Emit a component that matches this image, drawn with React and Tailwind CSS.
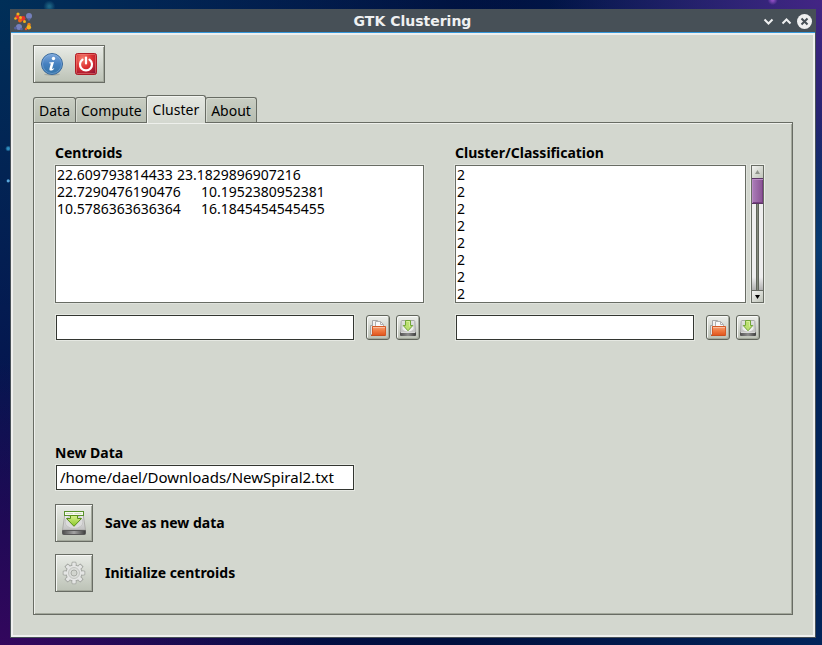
import React from "react";

const CENTROIDS =
  "22.609793814433\t23.1829896907216\n22.7290476190476\t10.1952380952381\n10.5786363636364\t16.1845454545455";
const CLASSES = "2\n2\n2\n2\n2\n2\n2\n2";

function AppLogo() {
  return (
    <svg viewBox="0 0 20 20" className="h-5 w-5" aria-hidden="true">
      <circle cx="16" cy="5" r="3" fill="#7480bc" />
      <circle cx="6" cy="16" r="3" fill="#7480bc" />
      <circle cx="2.500" cy="17" r="1.500" fill="#56629c" />
      <circle cx="16" cy="8.500" r="1.300" fill="#56629c" />
      <circle cx="8.500" cy="18" r="1.300" fill="#56629c" />
      <circle cx="4.500" cy="6" r="2.200" fill="#e6342c" />
      <circle cx="10" cy="7.500" r="2.400" fill="#e6342c" />
      <circle cx="7" cy="9.500" r="2" fill="#ee6418" />
      <circle cx="5" cy="3" r="1.600" fill="#f2b01c" />
      <circle cx="7.500" cy="6.500" r="1.500" fill="#f2b01c" />
      <circle cx="2.500" cy="7.500" r="1.300" fill="#f2b01c" />
      <circle cx="11.500" cy="10.500" r="1.500" fill="#f2b01c" />
      <circle cx="16" cy="13.500" r="1.700" fill="#ee7a18" />
      <circle cx="15.800" cy="16.300" r="2.300" fill="#f2b01c" />
      <circle cx="13" cy="18" r="1.200" fill="#e6542c" />
    </svg>
  );
}

function InfoIcon() {
  return (
    <svg viewBox="0 0 24 24" className="h-6 w-6" aria-hidden="true">
      <defs>
        <linearGradient id="info" x1="0" y1="0" x2="0" y2="1">
          <stop offset="0" stopColor="#7fa9dc" />
          <stop offset="0.5" stopColor="#4580c0" />
          <stop offset="1" stopColor="#3373a6" />
        </linearGradient>
      </defs>
      <ellipse cx="12" cy="22.500" rx="8" ry="1.200" fill="#000" opacity="0.15" />
      <circle cx="12" cy="12" r="10.500" fill="url(#info)" stroke="#3a6a9c" />
      <circle cx="12" cy="12" r="9.500" fill="none" stroke="#8db6e4" strokeOpacity="0.5" />
      <circle cx="13.500" cy="6.500" r="1.700" fill="#fff" />
      <path d="M9.300 10.600 14 10l-1.800 6.300c-.2.900.4.900 1.700 0l.4.500c-1.300 1.400-2.500 1.900-3.600 1.800-1.200-.1-1.500-1-1.200-2.200l1.200-4.300c.2-.7 0-.9-1.500-.9z" fill="#fff" />
    </svg>
  );
}

function PowerIcon() {
  return (
    <svg viewBox="0 0 24 24" className="h-6 w-6" aria-hidden="true">
      <defs>
        <radialGradient id="power" cx="0.35" cy="0.25" r="0.9">
          <stop offset="0" stopColor="#f58070" />
          <stop offset="0.5" stopColor="#dc2f30" />
          <stop offset="1" stopColor="#8c1034" />
        </radialGradient>
      </defs>
      <rect x="1.500" y="1.500" width="21" height="21" rx="2" fill="url(#power)" stroke="#ae1d26" />
      <rect x="2.500" y="2.500" width="19" height="19" rx="1" fill="none" stroke="#f08a80" strokeOpacity="0.5" />
      <path d="M8.500 7.600a6 6 0 1 0 7 0" fill="none" stroke="#fff" strokeWidth="2.200" strokeLinecap="round" />
      <path d="M12 5.500v6" stroke="#fff" strokeWidth="2.200" strokeLinecap="round" />
    </svg>
  );
}

function FolderIcon() {
  return (
    <svg viewBox="0 0 16 16" className="h-4 w-4" aria-hidden="true">
      <defs>
        <linearGradient id="folder" x1="0" y1="0" x2="0" y2="1">
          <stop offset="0" stopColor="#f7a27a" />
          <stop offset="0.4" stopColor="#f08048" />
          <stop offset="1" stopColor="#e2531c" />
        </linearGradient>
      </defs>
      <path d="M.5 14.500v-9h2v9z" fill="#e6e6e6" stroke="#a6a6a6" />
      <path d="M2.500 13V.5h5l2 2V13z" fill="#f2f2f2" stroke="#a6a6a6" />
      <path d="M5.500 12V1.500h5l3 3V12z" fill="#fafafa" stroke="#b0b0b0" />
      <path d="M10.500 1.500v3h3" fill="none" stroke="#b0b0b0" />
      <path d="M2.500 6.500h13v9h-13z" fill="url(#folder)" stroke="#d65a26" />
      <path d="M3 7.500h12" stroke="#fbc6a8" strokeOpacity="0.8" />
      <path d="M1 15.500h14" stroke="#c9501f" />
    </svg>
  );
}

function SmallDriveIcon() {
  return (
    <svg viewBox="0 0 16 16" className="h-4 w-4" aria-hidden="true">
      <defs>
        <linearGradient id="sdrive" x1="0" y1="0" x2="0" y2="1">
          <stop offset="0" stopColor="#e4e5e4" />
          <stop offset="1" stopColor="#c2c3c2" />
        </linearGradient>
        <linearGradient id="sfront" x1="0" y1="0" x2="1" y2="0">
          <stop offset="0" stopColor="#505050" />
          <stop offset="0.5" stopColor="#8c8c8c" />
          <stop offset="1" stopColor="#404040" />
        </linearGradient>
      </defs>
      <path d="M2 .5h12q.6 0 .8 1l.7 11H.5l.7-11q.2-1 .8-1z" fill="url(#sdrive)" stroke="#a9aaa8" />
      <ellipse cx="8" cy="8" rx="5.500" ry="3.500" fill="#efefef" />
      <path d="M0 12.500h16V15q0 1-1 1H1q-1 0-1-1z" fill="url(#sfront)" />
      <path d="M1 12.500h14" stroke="#d8d8d8" />
      <path d="M5.500.5h5v5h2.300L8 10.800 3.200 5.500h2.300z" fill="#bce070" stroke="#72a63a" />
      <path d="M6.500 1.500h3v5" fill="none" stroke="#dcf2a8" strokeOpacity="0.8" />
    </svg>
  );
}

function DriveIcon() {
  return (
    <svg viewBox="0 0 26 26" className="h-[26px] w-[26px]" aria-hidden="true">
      <defs>
        <linearGradient id="drive" x1="0" y1="0" x2="0" y2="1">
          <stop offset="0" stopColor="#f2f2f2" />
          <stop offset="1" stopColor="#c0c0c0" />
        </linearGradient>
        <linearGradient id="front" x1="0" y1="0" x2="1" y2="0">
          <stop offset="0" stopColor="#4c4c4c" />
          <stop offset="0.5" stopColor="#a4a4a4" />
          <stop offset="1" stopColor="#3c3c3c" />
        </linearGradient>
        <linearGradient id="arrow" x1="0" y1="0" x2="0" y2="1">
          <stop offset="0" stopColor="#d8f08e" />
          <stop offset="1" stopColor="#8ac926" />
        </linearGradient>
      </defs>
      <path d="M4 3.500h18l2.500 16.500h-23z" fill="url(#drive)" stroke="#adada9" />
      <ellipse cx="13" cy="12" rx="9" ry="6.500" fill="#dcdcdc" stroke="#c4c4c4" />
      <path d="M1.500 20.500h23v3q0 1-1 1h-21q-1 0-1-1z" fill="url(#front)" stroke="#595959" />
      <rect x="3.500" y="1.500" width="19" height="4" fill="#f6faee" stroke="#58912a" />
      <path d="M5 3.500h7M13.500 3.500h7" stroke="#d5dccb" />
      <path d="M9.500 5.500h7v3h4L13 16.300 5.500 8.500h4z" fill="url(#arrow)" stroke="#589018" />
    </svg>
  );
}

const TEETH = [0, 45, 90, 135, 180, 225, 270, 315];

function GearIcon() {
  return (
    <svg viewBox="0 0 24 24" className="h-6 w-6" aria-hidden="true">
      <g fill="#e4e5e4" stroke="#a5a8a3" strokeWidth="1">
        {TEETH.map((a) => (
          <path key={a} d="M9.600 5 10.200 1.200h3.600l.6 3.800z" transform={`rotate(${a} 12 12)`} />
        ))}
        <circle cx="12" cy="12" r="8" />
      </g>
      <g fill="#e4e5e4">
        {TEETH.map((a) => (
          <path key={a} d="M10.200 6.500 10.700 1.800h2.600l.5 4.700z" transform={`rotate(${a} 12 12)`} />
        ))}
      </g>
      <circle cx="12" cy="12" r="5.500" fill="#dcdedb" stroke="#c3c5c1" />
      <circle cx="12" cy="12" r="3" fill="#d2d5cf" stroke="#a8aba5" />
    </svg>
  );
}

function SmallButton({ label, children }) {
  return (
    <button
      type="button"
      aria-label={label}
      className="flex h-[25px] w-6 shrink-0 items-center justify-center rounded-[3px] border border-[#60645b] bg-linear-to-b from-[#eceeea] to-[#bcc1b6] shadow-[inset_1px_1px_0_#f8f9f7,inset_-1px_-1px_0_#a3a89c]"
    >
      {children}
    </button>
  );
}

function FileRow({ label }) {
  return (
    <div className="ml-px mr-1 mt-3 flex">
      <input
        aria-label={label}
        className="h-[25px] w-0 min-w-0 flex-1 border border-[#333631] bg-white px-[3px] text-[14px] outline-1 outline-[#e5e8e2]"
      />
      <div className="ml-3 flex gap-1.5">
        <SmallButton label="Open file"><FolderIcon /></SmallButton>
        <SmallButton label="Save file"><SmallDriveIcon /></SmallButton>
      </div>
    </div>
  );
}

function Tab({ children, active = false }) {
  return (
    <button
      type="button"
      role="tab"
      aria-selected={active}
      className={
        active
          ? "relative -mx-px -mb-px h-7 rounded-t-[3px] border border-b-0 border-[#686c64] bg-linear-to-b from-[#e4e7e1] to-[#d3d7cf] px-1.5 pb-px shadow-[inset_1px_1px_0_#f3f5f1]"
          : "-mr-px h-[25px] rounded-t-[3px] border border-b-0 border-[#686c64] bg-linear-to-b from-[#c9cec3] to-[#b7bdb1] px-[5px] shadow-[inset_1px_1px_0_#d7dbd2]"
      }
    >
      {children}
    </button>
  );
}

function Scrollbar() {
  return (
    <div className="ml-[5px] flex h-[138px] w-[13px] shrink-0 flex-col border border-[#686c64] bg-[#efefef] outline-1 outline-[#e9ece6]">
      <button type="button" aria-label="Scroll up" className="flex h-3 shrink-0 items-center justify-center bg-linear-to-br from-[#f2f3f1] to-[#bfc4b9]">
        <svg viewBox="0 0 5 4" className="h-1 w-[5px]" aria-hidden="true"><path d="M0 4 2.500 0 5 4z" fill="#8f938b" /></svg>
      </button>
      <div className="h-[26px] shrink-0 border-y border-[#5b3566] bg-linear-to-r from-[#ad7fba] to-[#885193] shadow-[inset_1px_1px_0_#b98cc5,inset_-1px_-1px_0_#774083]" />
      <div className="flex flex-1 justify-center bg-linear-to-b from-[#efefef] from-85% to-[#b2b2b2]">
        <div className="w-[3px] border-x border-[#60645b] bg-[#858a7d]" />
      </div>
      <button type="button" aria-label="Scroll down" className="flex h-3 shrink-0 items-center justify-center border-t border-[#686c64] bg-linear-to-br from-[#f2f3f1] to-[#bfc4b9]">
        <svg viewBox="0 0 5 4" className="h-1 w-[5px]" aria-hidden="true"><path d="M0 0h5L2.500 4z" fill="#000" /></svg>
      </button>
    </div>
  );
}

const textBox =
  "block h-[138px] w-0 min-w-0 flex-1 resize-none overflow-hidden whitespace-pre border border-[#686c64] bg-white px-px text-[14px] leading-[17px] outline-1 outline-[#dfe2dc] [tab-size:24px]";
const squareButton =
  "flex h-[38px] w-[38px] items-center justify-center border border-[#686c64] bg-linear-to-b from-[#e8ebe6] to-[#bcc2b6] shadow-[inset_1px_1px_0_#f6f7f5,inset_-1px_-1px_0_#a3a89c]";

export default function App() {
  return (
    <div className="flex min-h-screen flex-col bg-[radial-gradient(circle_at_1%_23%,#2f8fc0_1px,transparent_3px),radial-gradient(circle_at_1%_28%,#5aa8dc_1px,transparent_2px),radial-gradient(circle_at_99%_92%,#2470a8_1px,transparent_3px),radial-gradient(circle_at_94%_0%,#8a4cc0_1px,transparent_5px),radial-gradient(circle_at_6%_1%,#1d6484_1px,transparent_6px),radial-gradient(circle_at_100%_38%,#083c72,transparent_14%),radial-gradient(circle_at_100%_0%,#432584,transparent_26%),radial-gradient(circle_at_0%_105%,#38065f,transparent_30%),radial-gradient(circle_at_0%_0%,#002f58,transparent_50%),linear-gradient(90deg,#060d4c,#000f3e_55%,#02245a)] pb-2 pl-2.5 pr-1.5 pt-[9px] font-['Noto_Sans',sans-serif] text-[14px] leading-[17px] text-black">
      <main className="flex flex-1 flex-col border border-[#475057]">
        <header className="flex h-[22px] items-center bg-[#475057] pl-0.5 pr-[3px] text-[#eff0f1]">
          <div className="flex w-[55px]"><AppLogo /></div>
          <h1 className="flex-1 text-center font-['DejaVu_Sans',sans-serif] text-[14px] font-bold">GTK Clustering</h1>
          <div className="flex w-[55px] items-center justify-end gap-[3px]">
            <button type="button" aria-label="Minimize">
              <svg viewBox="0 0 15 15" className="h-[15px] w-[15px]"><path d="M3.500 5.500l4 4 4-4" fill="none" stroke="#eff0f1" strokeWidth="2" /></svg>
            </button>
            <button type="button" aria-label="Maximize">
              <svg viewBox="0 0 15 15" className="h-[15px] w-[15px]"><path d="M3.500 9.500l4-4 4 4" fill="none" stroke="#eff0f1" strokeWidth="2" /></svg>
            </button>
            <button type="button" aria-label="Close">
              <svg viewBox="0 0 15 15" className="h-[15px] w-[15px]">
                <circle cx="7.500" cy="7.500" r="7.500" fill="#eff0f1" />
                <path d="M4.500 4.500l6 6M10.500 4.500l-6 6" stroke="#475057" strokeWidth="2" />
              </svg>
            </button>
          </div>
        </header>
        <div className="flex flex-1 flex-col border-t border-[#3498db]">
          <div className="flex flex-1 flex-col border-2 border-[#eff0ef] bg-[#d3d7cf] px-5 pb-5 pt-2.5">
            <div className="flex h-[38px] w-[72px] items-center justify-center gap-2.5 border border-[#686c64] bg-linear-to-b from-[#e8ebe6] to-[#bcc2b6] shadow-[inset_1px_1px_0_#f6f7f5,inset_-1px_-1px_0_#a3a89c]">
              <button type="button" aria-label="Information"><InfoIcon /></button>
              <button type="button" aria-label="Quit"><PowerIcon /></button>
            </div>

            <div role="tablist" className="mt-3 flex h-[27px] items-end">
              <Tab>Data</Tab>
              <Tab>Compute</Tab>
              <Tab active>Cluster</Tab>
              <Tab>About</Tab>
            </div>

            <section className="flex-1 border border-[#686c64] pb-[22px] pl-[21px] pr-7 pt-[21px] shadow-[inset_1px_1px_0_#eef0ec,inset_-1px_-1px_0_#a3a89c]">
              <div className="grid grid-cols-[369fr_309fr] gap-x-[31px]">
                <div>
                  <label htmlFor="centroids" className="block font-bold">Centroids</label>
                  <div className="mt-1 flex">
                    <textarea id="centroids" readOnly defaultValue={CENTROIDS} className={textBox} />
                  </div>
                  <FileRow label="Centroids file" />
                </div>
                <div>
                  <label htmlFor="classes" className="block font-bold">Cluster/Classification</label>
                  <div className="mt-1 flex">
                    <textarea id="classes" readOnly defaultValue={CLASSES} className={textBox} />
                    <Scrollbar />
                  </div>
                  <FileRow label="Classification file" />
                </div>
                <div className="mt-[104px]">
                  <label htmlFor="newdata" className="block font-bold">New Data</label>
                  <div className="ml-px mr-[70px] mt-1 flex">
                    <input
                      id="newdata"
                      defaultValue="/home/dael/Downloads/NewSpiral2.txt"
                      className="h-[25px] w-0 min-w-0 flex-1 border border-[#333631] bg-white px-[3px] pb-px text-[15px] outline-1 outline-[#e5e8e2]"
                    />
                  </div>
                  <div className="mt-3.5 flex items-center gap-3">
                    <button id="save" type="button" className={squareButton} aria-label="Save as new data"><DriveIcon /></button>
                    <label htmlFor="save" className="pb-0.5 font-bold">Save as new data</label>
                  </div>
                  <div className="mt-3 flex items-center gap-3">
                    <button id="init" type="button" disabled className={squareButton} aria-label="Initialize centroids"><GearIcon /></button>
                    <label htmlFor="init" className="pb-0.5 font-bold">Initialize centroids</label>
                  </div>
                </div>
              </div>
            </section>
          </div>
        </div>
      </main>
    </div>
  );
}
